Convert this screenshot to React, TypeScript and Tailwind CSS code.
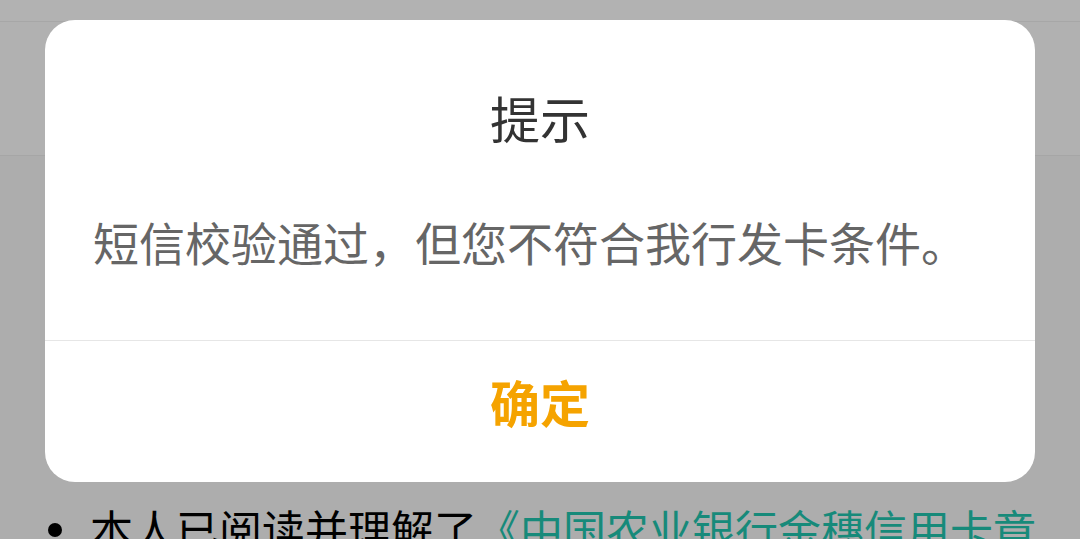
import React from 'react'

const font = "font-['Noto_Sans_CJK_SC','Noto_Sans',sans-serif]"

const App = () => {
    return (
        <div className={`relative w-[1080px] h-[539px] overflow-hidden bg-[#adadad] ${font}`}>
            {/* page behind the mask */}
            <div className="flex flex-col h-full">
                <div className="h-[22px] bg-[#b2b2b2] border-b border-[#a7a7a7]" />
                <div className="h-[134px] bg-[#b1b1b1] border-b border-[#a6a6a6]" />
                <div className="flex-1" />
                <ul className="flex items-start gap-[28px] pl-[48px] h-[62px] -mb-[20px] text-[43px] leading-[62px]">
                    <li className="mt-[26px] w-[14px] h-[14px] rounded-full bg-black shrink-0" />
                    <li className="w-[960px] h-[62px] overflow-hidden text-black">
                        本人已阅读并理解了<span className="text-[#178a7a]">《中国农业银行金穗信用卡章程》</span>
                    </li>
                </ul>
            </div>

            {/* dialog */}
            <div className="absolute left-[45px] top-[20px] w-[990px] h-[462px] rounded-[30px] bg-white flex flex-col">
                <div className="pt-[67px] text-center text-[50px] leading-[60px] text-[#333333]">
                    提示
                </div>
                <div className="mt-[64px] px-[48px] text-[46px] leading-[60px] text-[#666666] whitespace-nowrap">
                    短信校验通过，但您不符合我行发卡条件。
                </div>
                <div className="flex-1" />
                <div className="h-[142px] border-t border-[#e6e6e6] flex justify-center">
                    <button className="mt-[29px] h-[62px] text-[50px] leading-[62px] font-bold text-[#f5a300]">
                        确定
                    </button>
                </div>
            </div>
        </div>
    )
}

export default App
